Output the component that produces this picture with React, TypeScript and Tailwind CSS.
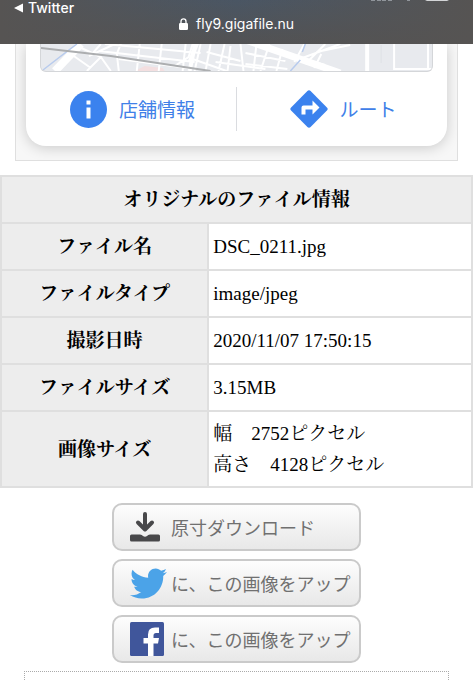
import React from 'react';
import { FaTwitter } from 'react-icons/fa';

function StatusBar() {
  return (
    <header className="relative h-11 overflow-hidden bg-gradient-to-b from-[#4a5664] to-[#525253] text-white font-['Inter','Noto_Sans_CJK_JP',sans-serif]">
      <div className="absolute inset-0 bg-gradient-to-r from-[#565453] via-transparent to-[#565453]" />
      <div className="relative flex h-4 items-center justify-between pl-[13px] pr-6">
        <a href="#twitter" className="flex items-center gap-1 text-sm leading-4 font-medium">
          <svg width="11" height="10" viewBox="0 0 11 10" aria-hidden="true">
            <path d="M1 5 10 .6v8.8z" fill="white" />
          </svg>
          Twitter
        </a>
        <svg className="self-start" width="80" height="2" viewBox="0 0 80 2" aria-hidden="true">
          <path d="M2 0h4M8 0h4M13 0h4M19 0h4M38 0h3" stroke="#a5abb1" strokeWidth="1.5" />
          <path d="M56 0h24l-2 1H58z" fill="#d3d5d7" />
        </svg>
      </div>
      <div className="relative flex h-4 items-center justify-center gap-2">
        <svg width="9" height="12" viewBox="0 0 9 12" aria-hidden="true">
          <rect x="0" y="5" width="9" height="7" rx="1.2" fill="white" />
          <path d="M2 6V3.4a2.5 2.6 0 0 1 5 0V6" fill="none" stroke="white" strokeWidth="1.3" />
        </svg>
        <span className="text-sm leading-4">fly9.gigafile.nu</span>
      </div>
    </header>
  );
}

function MapStrip() {
  return (
    <div className="h-7 overflow-hidden rounded-b-md border border-t-0 border-[#d4d6d9] bg-[#e8eaee]">
      <svg className="block h-full w-full" viewBox="0 0 392 27" preserveAspectRatio="none" aria-hidden="true">
        <path d="M94 27 L104 22 L122 24 L124 27z" fill="#f3dfe0" />
        <g fill="none" stroke="#fff" strokeWidth="2">
          <path d="M40 0 14 27" strokeWidth="8" />
          <path d="M30 10 50 24M36 2 60 13M46 27l14-14 10 14M48 12l26-12M60 0l-8 9M80 0l-4 10 2 17M99 0l-3 27M121 0l-3 27M58 7l96 11M64 0l96 9M78 15l70 9M145 0l-3 27M134 22l14-9 4-13M160 0l-6 27M152 15l34 12M170 0l-5 27M184 0l-6 27M166 8l34 9M190 2l-3 25M200 0l3 27M175 18l50 7M205 9l40 8M216 0l-3 27M229 0l-9 27M205 20l42 5M242 5l-6 22M225 5l60 16M264 0l-10 18M285 0l-20 20M300 0 262 14M310 1l-34 7M281 10l-7 14M354 0v26M354 25h38M388 0v25" />
          <path d="M205-4 300 29" strokeWidth="7" />
          <path d="M327 0v27" strokeWidth="4" />
          <path d="M155-2 149 27M157-2l-8 20" strokeWidth="4" />
        </g>
        <path d="M341 1v18" stroke="#dfe1e5" />
        <path d="M36 0Q20 12 2 26M265 0l-3 8M260 16l-10 11" fill="none" stroke="#b8cbed" strokeWidth="1.5" />
        <path d="M0 4 70 12 170 27" fill="none" stroke="#acaeb0" strokeWidth="2" />
      </svg>
    </div>
  );
}

function PhotoPreview() {
  return (
    <div className="mx-[15px] overflow-hidden border border-t-0 border-[#dfdfdf] bg-[#f7f7f7] px-[10px] pb-[14px]">
      <div className="rounded-b-[20px] bg-white px-[14px] shadow-[0_2px_14px_rgba(0,0,0,0.18)]">
        <MapStrip />
        <div className="grid h-[74px] grid-cols-2 items-center font-['Noto_Sans_CJK_JP',sans-serif] text-[19px] text-[#4080e8]">
          <a href="#info" className="flex h-11 items-center gap-3 border-r border-[#dadce0] pl-[30px]">
            <svg className="shrink-0" width="37" height="37" viewBox="0 0 37 37" aria-hidden="true">
              <circle cx="18.5" cy="18.5" r="18.5" fill="#3b82ee" />
              <path d="M16.5 9.5h4v4h-4zM16.5 16.5h4v11h-4z" fill="white" />
            </svg>
            店舗情報
          </a>
          <a href="#route" className="flex h-11 items-center gap-3 pl-[53px]">
            <svg className="shrink-0" width="38" height="38" viewBox="0 0 38 38" aria-hidden="true">
              <path d="M17.4 1.1q1.6-1.6 3.2 0l16.3 16.3q1.6 1.6 0 3.2L20.6 36.9q-1.6 1.6-3.2 0L1.1 20.6q-1.6-1.6 0-3.2z" fill="#3b82ee" />
              <path d="M11.5 24.5v-7q0-2 2-2h9v-5l7 7-7 7v-5h-7v5z" fill="white" />
            </svg>
            ルート
          </a>
        </div>
      </div>
    </div>
  );
}

const rows = [
  { label: 'ファイル名', value: 'DSC_0211.jpg' },
  { label: 'ファイルタイプ', value: 'image/jpeg' },
  { label: '撮影日時', value: '2020/11/07 17:50:15' },
  { label: 'ファイルサイズ', value: '3.15MB' },
];

const headCell = 'border-2 border-[#dfdfdf] bg-[#ededed] p-0 text-center font-bold';
const dataCell = 'border-2 border-[#dfdfdf] py-0 pl-1 text-left';

function FileInfo() {
  return (
    <table className="mt-[14px] w-full table-fixed border-collapse font-['Liberation_Serif','Noto_Serif_CJK_JP','Noto_Sans_CJK_JP',serif] text-[19px] leading-[31px] text-black">
      <colgroup>
        <col className="w-[44%]" />
        <col />
      </colgroup>
      <thead>
        <tr className="h-[47px]">
          <th colSpan={2} className={headCell}>オリジナルのファイル情報</th>
        </tr>
      </thead>
      <tbody>
        {rows.map((row) => (
          <tr key={row.label} className="h-[47px]">
            <th scope="row" className={headCell}>{row.label}</th>
            <td className={dataCell}>{row.value}</td>
          </tr>
        ))}
        <tr className="h-[76px]">
          <th scope="row" className={headCell}>画像サイズ</th>
          <td className={dataCell}>
            幅　2752ピクセル<br />高さ　4128ピクセル
          </td>
        </tr>
      </tbody>
    </table>
  );
}

function DownloadIcon() {
  return (
    <svg width="30" height="30" viewBox="0 0 30 30" aria-hidden="true">
      <path d="M15 2v14M8 10.5l7 7 7-7" fill="none" stroke="#48484a" strokeWidth="4" strokeLinecap="round" strokeLinejoin="round" />
      <path d="M1.5 22.5H10q2 0 3 1.5 2 1.5 4 0 1-1.5 3-1.5h8.500q1.500 0 1.500 1.500v4q0 1.500-1.500 1.500h-27Q0 29.500 0 28v-4q0-1.500 1.500-1.500z" fill="#48484a" />
    </svg>
  );
}

function FacebookIcon() {
  return (
    <svg width="34" height="34" viewBox="0 0 34 34" aria-hidden="true">
      <rect width="34" height="34" rx="1.5" fill="#40569b" />
      <path d="M18 34V21.500h-4.500V16H18v-3.500Q18 5.500 25 5.500h4V11h-3Q23.500 11 23.500 13.500V16H29l-1 5.500h-4.500V34z" fill="white" />
    </svg>
  );
}

function ActionButton({ icon, children }: { icon: React.ReactNode; children: React.ReactNode }) {
  return (
    <button
      type="button"
      className="flex h-12 w-[249px] items-center rounded-[10px] border-2 border-[#cacaca] bg-gradient-to-b from-[#fdfdfd] to-[#e8e8e8] pl-4 text-lg leading-6 whitespace-nowrap text-[#707070] font-['Noto_Sans_CJK_JP',sans-serif]"
    >
      <span className="flex w-[41px] shrink-0">{icon}</span>
      {children}
    </button>
  );
}

export default function App() {
  return (
    <div className="bg-white">
      <StatusBar />
      <main>
        <PhotoPreview />
        <FileInfo />
        <div className="mt-[15px] flex flex-col items-center gap-2">
          <ActionButton icon={<DownloadIcon />}>原寸ダウンロード</ActionButton>
          <ActionButton icon={<FaTwitter size={37} color="#4ba3e8" aria-hidden="true" />}>に、この画像をアップ</ActionButton>
          <ActionButton icon={<FacebookIcon />}>に、この画像をアップ</ActionButton>
        </div>
        <div className="mx-6 mt-2 h-[9px] border border-b-0 border-dotted border-[#aaa]" />
      </main>
    </div>
  );
}
